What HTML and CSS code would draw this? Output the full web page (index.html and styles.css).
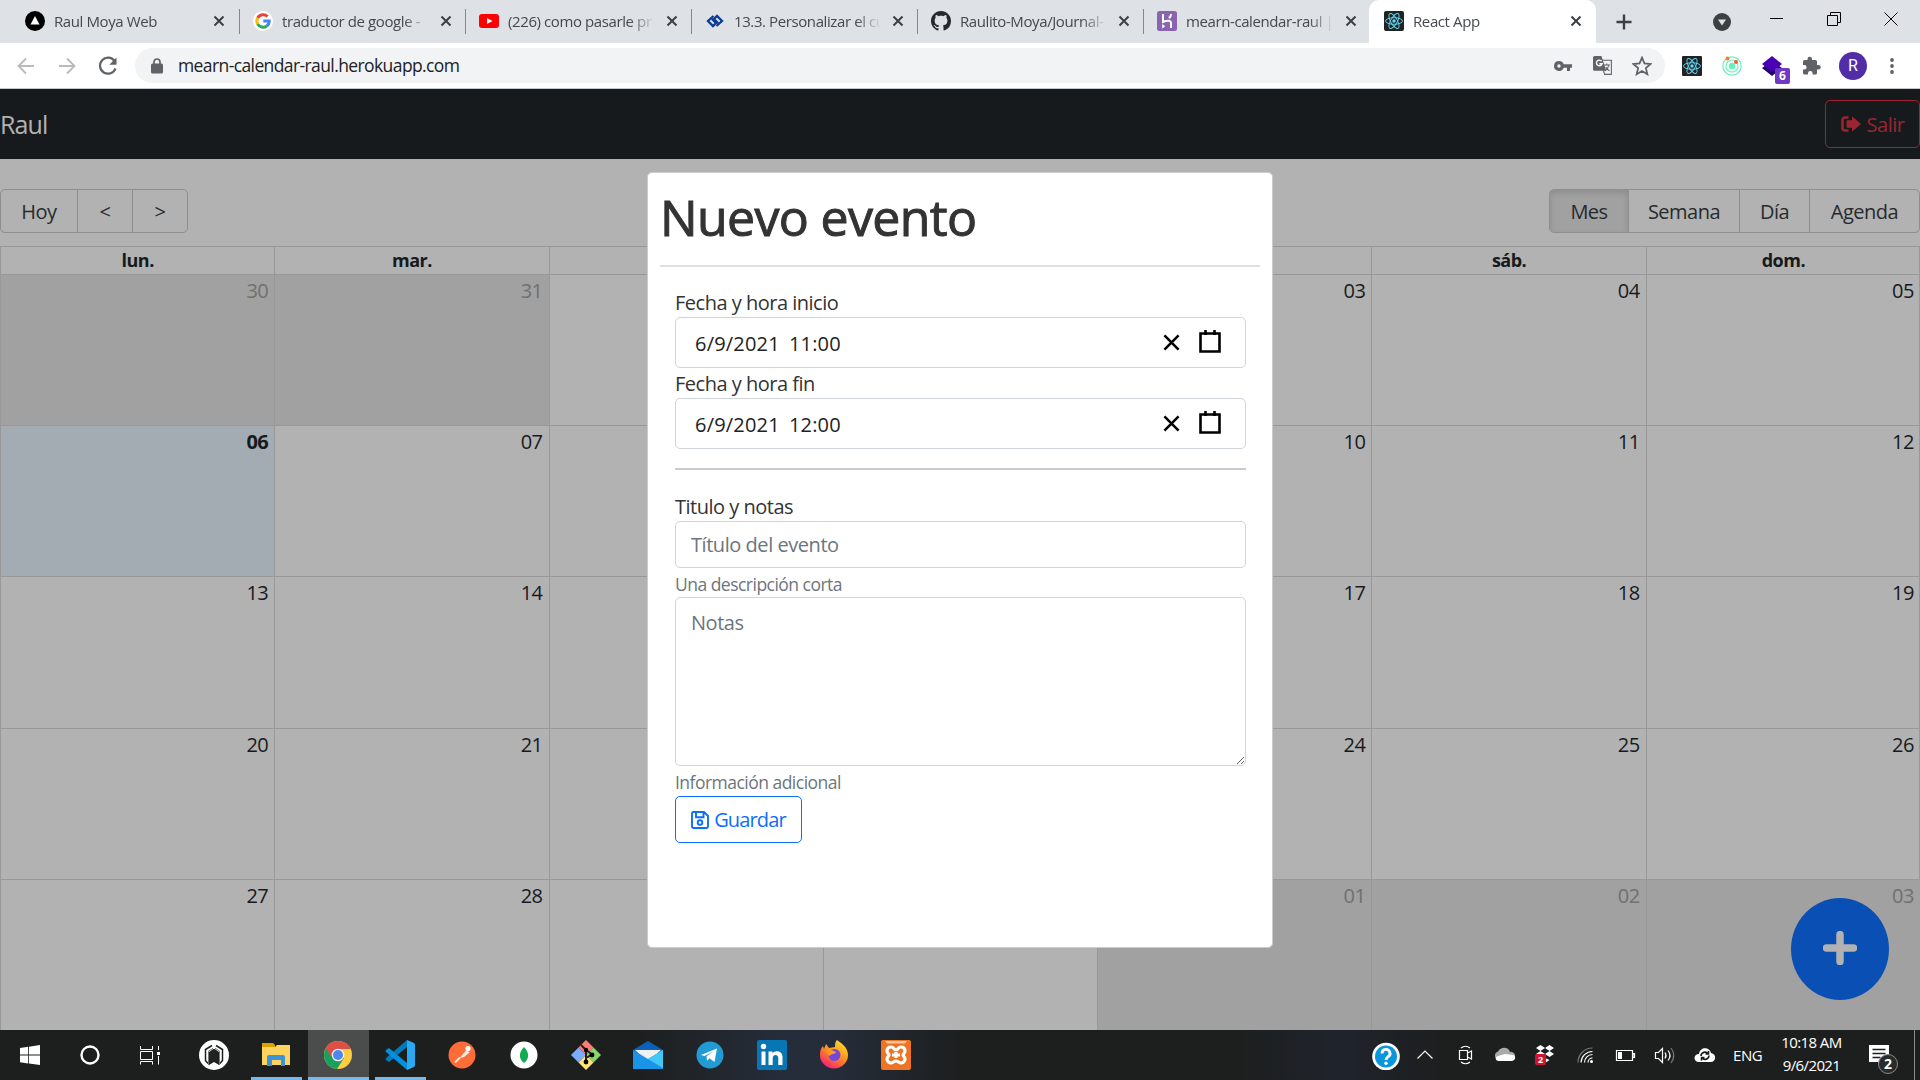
FILE: index.html
```html
<!DOCTYPE html>
<html lang="es">
<head>
<meta charset="utf-8">
<title>React App</title>
<link rel="stylesheet" href="styles.css">
</head>
<body>
<div class="screen">
  <header class="tabs">
    <div class="tab"><svg class="fav" viewBox="0 0 20 20"><circle cx="10" cy="10" r="10" fill="#000"/><path d="M10 5l4.500 8.500h-9z" fill="#fff"/></svg><span class="tab-title">Raul Moya Web</span><svg class="x" viewBox="0 0 12 12"><path d="M1.500 1.500l9 9M10.500 1.500l-9 9"/></svg></div>
    <div class="tab"><svg class="fav" viewBox="0 0 20 20"><circle cx="10" cy="10" r="10" fill="#fff"/><g fill="none" stroke-width="3"><path d="M4.600 7A6.300 6.300 0 0 1 14.500 5.500" stroke="#ea4335"/><path d="M4.600 7A6.300 6.300 0 0 0 4.600 13" stroke="#fbbc05"/><path d="M4.600 13A6.300 6.300 0 0 0 13.800 15" stroke="#34a853"/><path d="M13.800 15A6.300 6.300 0 0 0 16.200 10H10.300" stroke="#4285f4"/></g></svg><span class="tab-title">traductor de google -</span><svg class="x" viewBox="0 0 12 12"><path d="M1.500 1.500l9 9M10.500 1.500l-9 9"/></svg></div>
    <div class="tab"><svg class="fav" viewBox="0 0 20 20"><rect y="3" width="20" height="14" rx="3" fill="#f00"/><path d="M8 7l5.500 3L8 13z" fill="#fff"/></svg><span class="tab-title">(226) como pasarle pr</span><svg class="x" viewBox="0 0 12 12"><path d="M1.500 1.500l9 9M10.500 1.500l-9 9"/></svg></div>
    <div class="tab"><svg class="fav" viewBox="0 0 20 20"><g fill="none" stroke="#0b3b94" stroke-width="2.300"><path d="M8.500 5L3 10l5 5 3-3-4-4"/><path d="M11.500 15L17 10l-5-5-3 3 4 4"/></g></svg><span class="tab-title">13.3. Personalizar el cu</span><svg class="x" viewBox="0 0 12 12"><path d="M1.500 1.500l9 9M10.500 1.500l-9 9"/></svg></div>
    <div class="tab"><svg class="fav" viewBox="0 0 16 16"><path fill="#24292e" d="M8 0C3.580 0 0 3.580 0 8c0 3.540 2.290 6.530 5.470 7.590.4.070.55-.17.55-.38 0-.19-.01-.82-.01-1.490-2.010.37-2.530-.49-2.690-.94-.09-.23-.48-.94-.82-1.130-.28-.15-.68-.52-.01-.53.63-.01 1.080.58 1.230.82.720 1.210 1.870.87 2.330.66.070-.52.28-.87.51-1.070-1.780-.2-3.640-.89-3.640-3.950 0-.87.31-1.590.82-2.150-.08-.2-.36-1.020.08-2.120 0 0 .67-.21 2.200.82.640-.18 1.320-.27 2-.27s1.360.09 2 .27c1.530-1.040 2.200-.82 2.200-.82.440 1.100.16 1.920.08 2.120.51.56.82 1.270.82 2.150 0 3.070-1.870 3.750-3.650 3.950.29.25.54.73.54 1.480 0 1.070-.01 1.930-.01 2.200 0 .21.15.46.55.38A8.010 8.010 0 0 0 16 8c0-4.420-3.580-8-8-8z"/></svg><span class="tab-title">Raulito-Moya/Journal-</span><svg class="x" viewBox="0 0 12 12"><path d="M1.500 1.500l9 9M10.500 1.500l-9 9"/></svg></div>
    <div class="tab last"><svg class="fav" viewBox="0 0 20 20"><rect width="20" height="20" rx="2.500" fill="#8a63b3"/><path d="M6 3v8c3-1.500 8-2.500 8 1v5M14 3c0 2-1 3.200-2 4.200" fill="none" stroke="#fff" stroke-width="2"/><path d="M5.200 13l3 2.200-3 2.300z" fill="#fff"/></svg><span class="tab-title">mearn-calendar-raul |</span><svg class="x" viewBox="0 0 12 12"><path d="M1.500 1.500l9 9M10.500 1.500l-9 9"/></svg></div>
    <div class="tab active"><svg class="fav" viewBox="0 0 20 20"><rect width="20" height="20" rx="2" fill="#222"/><g fill="none" stroke="#61dafb" stroke-width=".9"><ellipse cx="10" cy="10" rx="8.500" ry="3.300"/><ellipse cx="10" cy="10" rx="8.500" ry="3.300" transform="rotate(60 10 10)"/><ellipse cx="10" cy="10" rx="8.500" ry="3.300" transform="rotate(120 10 10)"/></g><circle cx="10" cy="10" r="1.700" fill="#61dafb"/></svg><span class="tab-title">React App</span><svg class="x" viewBox="0 0 12 12"><path d="M1.500 1.500l9 9M10.500 1.500l-9 9"/></svg></div>
    <svg class="new-tab" viewBox="0 0 16 16"><path d="M8 .5v15M.5 8h15" stroke="#3c4043" stroke-width="2.400"/></svg>
    <svg class="tab-search" viewBox="0 0 18 18"><circle cx="9" cy="9" r="9" fill="#3c4043"/><path d="M5 6.500h8L9 12.500z" fill="#dee1e6"/></svg>
    <div class="window-buttons">
      <svg viewBox="0 0 14 14"><path d="M0 6.500h13"/></svg>
      <svg viewBox="0 0 14 14"><path d="M.5 3.500h10v10H.5zM3.500 3V.5h10v10H11"/></svg>
      <svg viewBox="0 0 14 14"><path d="M.5.5l13 13M13.500.5l-13 13"/></svg>
    </div>
  </header>

  <div class="address-row">
    <div class="nav-icons">
      <svg viewBox="0 0 20 20"><path d="M18 10H3M10 2.500L2.500 10l7.500 7.500" stroke="#bababc"/></svg>
      <svg viewBox="0 0 20 20"><path d="M2 10h15M10 2.500l7.500 7.500-7.500 7.500" stroke="#bababc"/></svg>
      <svg viewBox="0 0 20 20"><path d="M16.500 5A8 8 0 1 0 17.500 12.500" stroke="#5f6368" stroke-width="2.200"/><path d="M18.500 1.500v7.200h-7.200z" fill="#5f6368"/></svg>
    </div>
    <div class="omnibox">
      <svg class="lock" viewBox="0 0 12 16"><rect y="5.500" width="12" height="10" rx="1.500" fill="#5f6368"/><path d="M3 6V4a3 3 0 0 1 6 0v2" fill="none" stroke="#5f6368" stroke-width="1.700"/></svg>
      <span class="url">mearn-calendar-raul.herokuapp.com</span>
      <svg class="key" viewBox="0 0 18 10"><path fill="#5f6368" fill-rule="evenodd" d="M5 0a5 5 0 1 0 4.700 6.700h3.300V10h3V6.700h2V3.300H9.700A5 5 0 0 0 5 0zm0 3.300a1.700 1.700 0 1 1 0 3.400 1.700 1.700 0 0 1 0-3.400z"/></svg>
      <svg class="translate" viewBox="0 0 18 18"><path d="M7 4h10.400v13.400H11z" fill="#f1f3f4" stroke="#5f6368"/><path d="M1.500 0h6.500l4.500 14H1.500A1.500 1.500 0 0 1 0 12.500v-11A1.500 1.500 0 0 1 1.500 0z" fill="#5f6368"/><path d="M8.200 5A2.700 2.700 0 1 0 8.600 7.300H6" fill="none" stroke="#fff" stroke-width="1.300"/><path d="M10.500 8.500h5.500M13 7v1.500M15 8.500c-.5 3-2 4.500-3.500 5.500M12 10.500c1 1.500 2 2.500 3.500 3.500" fill="none" stroke="#5f6368"/></svg>
      <svg class="star" viewBox="0 0 18 18"><path d="M9 1.500l2.200 5.200 5.600.5-4.300 3.700 1.300 5.500L9 13.500l-4.800 2.900 1.300-5.500L1.200 7.200l5.600-.5z" fill="none" stroke="#5f6368" stroke-width="1.600"/></svg>
    </div>
    <div class="extensions">
      <svg viewBox="0 0 20 20"><rect width="20" height="20" rx="1" fill="#222"/><g fill="none" stroke="#61dafb" stroke-width=".9"><ellipse cx="10" cy="10" rx="8.500" ry="3.300"/><ellipse cx="10" cy="10" rx="8.500" ry="3.300" transform="rotate(60 10 10)"/><ellipse cx="10" cy="10" rx="8.500" ry="3.300" transform="rotate(120 10 10)"/></g><circle cx="10" cy="10" r="1.700" fill="#61dafb"/></svg>
      <svg viewBox="0 0 20 20"><circle cx="10" cy="10" r="9.200" fill="none" stroke="#6ff2b4" stroke-width="1.200"/><circle cx="10" cy="10" r="6" fill="none" stroke="#6ff2c8" stroke-width="1.200"/><circle cx="10" cy="10" r="3.200" fill="#5ef5b5"/><circle cx="5.500" cy="2.500" r="2" fill="#ff7a2f"/><circle cx="14" cy="6" r="2" fill="#ff5530"/></svg>
      <span class="layers"><svg viewBox="0 0 20 20"><path d="M0 12l10 8 10-8-10-7z" fill="#200070"/><path d="M10 0l10 8-10 8L0 8z" fill="#4a00b4"/></svg><b class="count">6</b></span>
      <svg viewBox="0 0 20 20"><path fill="#5f6368" d="M16.500 9H15V5.500A1.500 1.500 0 0 0 13.500 4H10V3a2 2 0 0 0-4.500 0v1H2.500A1.500 1.500 0 0 0 1 5.500V9h1.300a2.300 2.300 0 0 1 0 4.600H1V17a1.500 1.500 0 0 0 1.500 1.500H6v-1.300a2.300 2.300 0 0 1 4.600 0v1.300h2.900A1.500 1.500 0 0 0 15 17v-3.500h1.500a2.250 2.250 0 0 0 0-4.500z"/></svg>
      <span class="avatar">R</span>
      <svg class="dots" viewBox="0 0 4 16"><circle cx="2" cy="2" r="1.900"/><circle cx="2" cy="8" r="1.900"/><circle cx="2" cy="14" r="1.900"/></svg>
    </div>
  </div>

  <main class="page">
    <nav class="navbar"><span class="brand">Raul</span>
      <button class="logout"><svg viewBox="0 0 20 16"><path d="M7.500 1.500H4A2.500 2.500 0 0 0 1.500 4v8A2.500 2.500 0 0 0 4 14.500h3.500" fill="none" stroke="currentColor" stroke-width="2.600"/><path d="M11.500 1.200v3.600H6v6.400h5.500v3.600L19.500 8z" fill="currentColor" stroke="currentColor" stroke-linejoin="round"/></svg><span>Salir</span></button>
    </nav>
    <div class="cal-toolbar">
      <div class="group nav-group"><button>Hoy</button><button>&lt;</button><button>&gt;</button></div>
      <div class="group view-group"><button class="pressed">Mes</button><button>Semana</button><button>Día</button><button>Agenda</button></div>
    </div>
    <section class="calendar">
      <div class="week head"><div>lun.</div><div>mar.</div><div></div><div></div><div></div><div>sáb.</div><div>dom.</div></div>
      <div class="week"><div class="off">30</div><div class="off">31</div><div></div><div></div><div>03</div><div>04</div><div>05</div></div>
      <div class="week"><div class="today">06</div><div>07</div><div></div><div></div><div>10</div><div>11</div><div>12</div></div>
      <div class="week"><div>13</div><div>14</div><div></div><div></div><div>17</div><div>18</div><div>19</div></div>
      <div class="week"><div>20</div><div>21</div><div></div><div></div><div>24</div><div>25</div><div>26</div></div>
      <div class="week"><div>27</div><div>28</div><div></div><div></div><div class="off">01</div><div class="off">02</div><div class="off">03</div></div>
    </section>
    <div class="fab"><svg viewBox="0 0 34 34"><path d="M17 3.500v27M3.500 17h27" stroke="#b2b2b2" stroke-width="7.500" stroke-linecap="round"/></svg></div>
    <form class="modal">
      <h1>Nuevo evento</h1>
      <hr class="title-rule">
      <div class="fields">
        <label>Fecha y hora inicio</label>
        <div class="picker"><span>6/9/2021</span><span>11:00</span><svg class="clear" viewBox="0 0 18 18"><path d="M1.500 1.500l15 15M16.500 1.500l-15 15"/></svg><svg class="cal-icon" viewBox="0 0 22 23"><path d="M1.500 3.500h19v18h-19zM6.500 0v5M15.500 0v5"/></svg></div>
        <label>Fecha y hora fin</label>
        <div class="picker"><span>6/9/2021</span><span>12:00</span><svg class="clear" viewBox="0 0 18 18"><path d="M1.500 1.500l15 15M16.500 1.500l-15 15"/></svg><svg class="cal-icon" viewBox="0 0 22 23"><path d="M1.500 3.500h19v18h-19zM6.500 0v5M15.500 0v5"/></svg></div>
        <hr class="field-rule">
        <label>Titulo y notas</label>
        <input class="control" type="text" placeholder="Título del evento">
        <small>Una descripción corta</small>
        <textarea class="control" placeholder="Notas"></textarea>
        <small class="notes-help">Información adicional</small>
        <button class="save" type="button"><svg viewBox="0 0 18 18"><path d="M1 2.500A1.500 1.500 0 0 1 2.500 1H13l4 4v10.500a1.500 1.500 0 0 1-1.500 1.500h-13A1.500 1.500 0 0 1 1 15.500zM5 1.500v4.700h7.500V1.500"/><circle cx="9" cy="11.500" r="2.300"/></svg><span>Guardar</span></button>
      </div>
    </form>
  </main>

  <footer class="taskbar">
    <div class="system">
      <svg viewBox="0 0 20 20" width="20" height="20" fill="#fff"><path d="M0 3l8.200-1.200V9.500H0zM9 1.700L20 0v9.500H9zM0 10.400h8.200v8L0 17.300zM9 10.400h11V20L9 18.400z"/></svg>
      <svg viewBox="0 0 20 20" width="20" height="20"><circle cx="10" cy="10" r="8.500" fill="none" stroke="#fff" stroke-width="2.400"/></svg>
      <svg viewBox="0 0 20 20" width="20" height="20" fill="none" stroke="#fff"><path d="M.5 1v3.500h12V1M.5 6.500h12v8H.5zM.5 19.500v-3h12v3M18.500 1v4M18.500 11v8.500"/><path d="M17 7h3v3h-3z" fill="#fff" stroke="none"/></svg>
    </div>
    <div class="apps">
      <div class="app"><svg viewBox="0 0 30 30"><circle cx="15" cy="15" r="15" fill="#fff"/><path d="M13 5.500L6.500 9.500v11l2.500 3M17 5.500l6.500 4v11l-2.500 3" fill="none" stroke="#1d1f1f" stroke-width="1.500"/><path d="M14 8.200l-4.500 3V25M16 8.200l4.500 3V25" fill="none" stroke="#777" stroke-width="1"/><path d="M15 8.500l5 3.500v13l-5-3-5 3V12z" fill="#202222"/><path d="M15 2v7" stroke="#fff" stroke-width="2"/></svg></div>
      <div class="app open"><svg viewBox="0 0 30 30"><path d="M1 3h11l2 2v6H1z" fill="#dfa100"/><path d="M1 7h13l2-2h13v20H1z" fill="#ffd45e"/><path d="M6 26V17q0-2 2-2h14q2 0 2 2v9h-4v-6h-9v6z" fill="#3b93d9"/></svg></div>
      <div class="app open current"><svg viewBox="0 0 30 30"><circle cx="15" cy="15" r="14" fill="#ffcd42"/><path d="M15 15L2.900 8A14 14 0 0 0 14 29l7-11z" fill="#18a05e"/><path d="M2.900 8A14 14 0 0 1 27.600 9H15v6L9 18z" fill="#dc4f42"/><circle cx="15" cy="15" r="6.300" fill="#f1f1f1"/><circle cx="15" cy="15" r="5" fill="#4b87ee"/></svg></div>
      <div class="app open"><svg viewBox="0 0 30 30"><path d="M22 0v7L4 22l-3-2q-1-1 0-2z" fill="#0078bd"/><path d="M22 30v-7L4 8 1 10q-1 1 0 2z" fill="#0090dc"/><path d="M22 0l7 3q1 1 1 2v20q0 1-1 2l-7 3z" fill="#29a9f2"/></svg></div>
      <div class="app"><svg viewBox="0 0 30 30"><circle cx="15" cy="15" r="13.500" fill="#ff6c37"/><circle cx="21" cy="8.500" r="2.600" fill="#fff"/><path d="M19.500 10l3 2.500-5.500 4.500-5 1.500z" fill="#ffe8df"/><path d="M13 17.500L8 22.500" fill="none" stroke="#ffe8df" stroke-width="1.800"/></svg></div>
      <div class="app"><svg viewBox="0 0 30 30"><circle cx="15" cy="15" r="13.500" fill="#fff"/><path d="M15 7c6 6 5 12 0 16-5-4-6-10 0-16z" fill="#13aa52"/></svg></div>
      <div class="app"><svg viewBox="0 0 30 30"><path d="M15 0l7.500 7.500L15 15 7.500 7.500z" fill="#ff7b78"/><path d="M22.500 7.500L30 15l-7.500 7.500L15 15z" fill="#89d56b"/><path d="M7.500 7.500L15 15l-7.500 7.500L0 15z" fill="#7badff"/><path d="M15 15l7.500 7.500L15 30l-7.500-7.500z" fill="#ffe37b"/><path d="M10 5l5 5v12M15 10l7 5M15 18l5-3" fill="none" stroke="#222" stroke-width="2"/><circle cx="15" cy="10" r="2.200"/><circle cx="21" cy="15" r="2.400"/><circle cx="15" cy="22" r="2.400"/></svg></div>
      <div class="app"><svg viewBox="0 0 30 30"><path d="M0 10L15 1l15 9v6H0z" fill="#0a61b7"/><path d="M2 10h26L15 22z" fill="#f0f0f0"/><path d="M0 10l15 9 15-9v19H0z" fill="#1a94e6"/><path d="M30 10v18L15 19z" fill="#42c8f5"/></svg></div>
      <div class="app"><svg viewBox="0 0 30 30"><circle cx="15" cy="15" r="13.500" fill="#229bd5"/><path d="M6 15l16-6.500L19.500 22l-5-3.700-2.500 2.500-.5-4.500 7-5-9 4.700z" fill="#fff"/></svg></div>
      <div class="app"><svg viewBox="0 0 30 30"><rect width="30" height="30" rx="2" fill="#0676b4"/><path d="M4.500 11.500h4V25h-4zM11.500 11.500h4v2c2-3.500 10-3 10 3.500v8h-4.200v-7c0-4-5.600-4-5.600 0v7h-4.200z" fill="#fff"/><circle cx="6.500" cy="6.500" r="2.700" fill="#fff"/></svg></div>
      <div class="app"><svg viewBox="0 0 30 30"><defs><linearGradient id="fox" x1=".8" y1="0" x2=".2" y2="1"><stop offset="0" stop-color="#ffe226"/><stop offset=".5" stop-color="#ff8a1f"/><stop offset="1" stop-color="#f5157e"/></linearGradient></defs><path d="M18 0c4 3 11 7 11 15a14 13.500 0 0 1-28 0c0-4 1-7 3-9l1 3 2-5 3 4 6-1c0-3 0-5 2-7z" fill="url(#fox)"/><circle cx="15.500" cy="15" r="6" fill="#7547d8"/><path d="M7 10c5-1 7 1 10 2-1 3-5 1-6 4-2-1-4-3-4-6z" fill="#ff9a22"/></svg></div>
      <div class="app"><svg viewBox="0 0 30 30"><rect width="30" height="30" rx="2" fill="#ec7424"/><path d="M4 1h22l-2 2.500H6z" fill="#ffc49b"/><path d="M10 7c3 0 3 3 5 3s2-3 5-3 4 2 4 4-2 3-2 4 2 2 2 4-2 4-4 4-3-2-5-2-3 2-5 2-4-2-4-4 2-3 2-4-2-2-2-4 1-4 4-4zM11 15h8M15 12v6" fill="none" stroke="#fff" stroke-width="3.200"/></svg></div>
    </div>
    <div class="tray">
      <svg viewBox="0 0 30 30"><circle cx="16" cy="16.500" r="13.800" fill="#fff"/><circle cx="16" cy="16.500" r="11" fill="#0b96dc"/><path d="M12 13.500a4 4 0 1 1 6 3.300c-1.500 1-2 1.500-2 3.200" fill="none" stroke="#fff" stroke-width="2.800"/><circle cx="16" cy="23.300" r="1.700" fill="#fff"/></svg>
      <svg viewBox="0 0 30 30"><path d="M7.500 18.500L15 11l7.500 7.500" class="line"/></svg>
      <svg viewBox="0 0 30 30"><path d="M9.500 10.500h8v9h-8zM17.500 13l4-2v8l-4-2M11 8q4.500-3.500 9 0M11 22q4.500 3.500 9 0" class="line"/></svg>
      <svg viewBox="0 0 30 30"><path d="M8 20a4.500 4.500 0 0 1 0-8.500C11 6 19 7 20 12a4 4 0 0 1 2 8z" fill="#aaa"/><path d="M8 21c-3-1-3-4 0-5l7-2 8 1c3 1 3 5-1 6z" fill="#fff"/></svg>
      <span class="dropbox"><svg viewBox="0 0 30 30"><path d="M10.500 5l4.500 3-4.500 3L6 8zM19.500 5L24 8l-4.500 3L15 8zM10.500 11l4.500 3-4.500 3L6 14zM19.500 11l4.500 3-4.500 3-4.500-3zM15 18l4.500 2-4.500 3-4.500-3z" fill="#fff"/></svg><b>2</b></span>
      <svg viewBox="0 0 30 30"><path d="M8 22.500A14.500 14.500 0 0 1 22.500 8" class="line dim"/><path d="M11 22.500A11.500 11.500 0 0 1 22.500 11.500M14.500 22.500a8 8 0 0 1 8-8M18 22.500a4.500 4.500 0 0 1 4.500-4.500" class="line"/><circle cx="21.500" cy="21.500" r="1.500" fill="#fff"/></svg>
      <svg viewBox="0 0 30 30"><path d="M6.500 10.500h16v10h-16zM23 13.500h1.500v4H23z" class="line"/><path d="M8 12h4v7H8z" fill="#fff"/></svg>
      <svg viewBox="0 0 30 30"><path d="M5.500 12.500h3l4-4v14l-4-4h-3zM15 12.500q2 3 0 6M18 10.500q4 5 0 10" class="line"/><path d="M21 8q5.500 7.500 0 15" class="line dim"/></svg>
      <svg viewBox="0 0 30 30"><path d="M9 22c-6 0-6-8 0-8C10 6 20 7 21 13c6 1 5 9 0 9z" fill="#fff"/><path d="M11 16a4 4 0 0 1 7-2.500M19 15.500a4 4 0 0 1-7 2.500M18.500 11v3h-3M11.500 20.500v-3h3" fill="none" stroke="#1d1f1f" stroke-width="1.600"/></svg>
    </div>
    <span class="lang">ENG</span>
    <div class="clock"><span>10:18 AM</span><span>9/6/2021</span></div>
    <div class="notices"><svg viewBox="0 0 20 20"><path d="M0 0h20v17h-6l-5 3v-3H0z" fill="#fff"/><path d="M3.500 4.500h13M3.500 8.500h13M3.500 12.500h8" stroke="#1d1f1f" stroke-width="1.300"/></svg><b>2</b></div>
  </footer>
</div>
</body>
</html>
```
FILE: styles.css
```css
* { box-sizing: border-box; }
body { margin: 0; font-family: "Open Sans", "Noto Sans", sans-serif; font-size: 20px; color: #333; }
svg { display: block; flex: none; }
button { font: inherit; color: inherit; background: none; padding: 0; letter-spacing: inherit; }
.screen { width: 1920px; height: 1080px; display: flex; flex-direction: column; overflow: hidden; letter-spacing: -0.5px; }

/* Browser tabs */
.tabs { height: 43px; flex: none; background: #dee1e6; display: flex; align-items: center; padding-left: 14px; }
.tab { width: 226px; height: 43px; flex: none; display: flex; align-items: center; padding: 0 14px 1px 13px; position: relative; }
.tab:first-child { padding-left: 11px; padding-right: 15px; }
.tab::after { content: ""; position: absolute; right: 0; top: 9px; width: 1px; height: 25px; background: #84888d; }
.tab.last::after, .tab.active::after { display: none; }
.tab.last { width: 225px; padding-right: 12px; }
.fav { width: 20px; height: 20px; margin-right: 9px; }
.tab-title { flex: 1; min-width: 0; white-space: nowrap; font-size: 15px; letter-spacing: -0.4px; color: #45494d; margin-right: 8px; -webkit-mask-image: linear-gradient(to right, #000 calc(100% - 28px), transparent 98%); mask-image: linear-gradient(to right, #000 calc(100% - 28px), transparent 98%); }
.x { width: 12px; height: 12px; fill: none; stroke: #3c4043; stroke-width: 2; }
.tab.active { width: 227px; background: #fff; border-radius: 10px 10px 0 0; padding-left: 15px; }
.new-tab { width: 16px; height: 16px; margin-left: 20px; }
.tab-search { width: 18px; height: 18px; margin-left: 81px; }
.window-buttons { display: flex; gap: 43px; margin: -6px 0 0 39px; }
.window-buttons svg { width: 14px; height: 14px; fill: none; stroke: #000; }

/* Address row */
.address-row { height: 46px; flex: none; background: #fff; border-bottom: 1px solid #c6c8cb; display: flex; align-items: center; padding-left: 16px; }
.nav-icons { display: flex; gap: 21px; width: 119px; }
.nav-icons svg { width: 20px; height: 20px; fill: none; stroke-width: 1.8; }
.omnibox { width: 1530px; height: 35px; border-radius: 18px; background: #f1f3f4; display: flex; align-items: center; padding: 0 13px 0 16px; }
.lock { width: 12px; height: 16px; }
.url { flex: 1; margin: -1px 0 0 15px; font-size: 17.5px; letter-spacing: -0.6px; color: #202124; }
.key { width: 18px; height: 10px; }
.translate { width: 19px; height: 19px; margin-left: 21px; }
.star { width: 20px; height: 20px; margin-left: 20px; }
.extensions { display: flex; align-items: center; margin-left: 17px; gap: 20px; }
.extensions > svg, .layers svg { width: 20px; height: 20px; }
.layers { position: relative; }
.count { position: absolute; left: 13px; top: 12px; width: 15px; height: 16px; border-radius: 2px; background: #6f38c5; color: #fff; font-size: 12px; line-height: 16px; text-align: center; letter-spacing: 0; }
.avatar { width: 28px; height: 28px; border-radius: 50%; background: #512da8; color: #fff; font: 16px/28px Roboto, sans-serif; text-align: center; letter-spacing: 0; margin-left: -3px; }
.extensions .dots { width: 4px; height: 16px; fill: #5f6368; margin-left: 3px; }

/* Application */
.page { height: 941px; flex: none; position: relative; background: #b2b2b2; display: flex; flex-direction: column; }
.navbar { height: 70px; flex: none; background: #171a1d; display: flex; align-items: center; justify-content: space-between; }
.brand { font-size: 25px; color: #b2b2b2; letter-spacing: -0.9px; }
.logout { width: 95px; height: 48px; border: 1px solid #9a2530; border-radius: 5px; color: #9a2530; display: flex; align-items: center; justify-content: center; gap: 6px; }
.logout svg { width: 20px; height: 16px; }
.cal-toolbar { flex: none; height: 87px; padding: 30px 0 13px; display: flex; justify-content: space-between; }
.group { display: grid; border: 1px solid #8e8e8e; border-radius: 5px; color: #272a2d; overflow: hidden; }
.group button { border: 0; border-right: 1px solid #8e8e8e; }
.group button:last-child { border-right: 0; }
.nav-group { grid-template-columns: 77px 55px 54px; }
.view-group { grid-template-columns: 79px 111px 70px 109px; }
.pressed { background: #a1a1a1; box-shadow: inset 0 3px 6px rgba(0,0,0,.13); }
.calendar { flex: 1; border-top: 1px solid #989898; display: grid; grid-template-rows: 27px repeat(5, 1fr); color: #171a1d; box-shadow: inset -1px 0 #989898; }
.week { display: grid; grid-template-columns: repeat(7, 1fr); }
.week > div { border-left: 1px solid #989898; text-align: right; padding: 2px 6px 0 0; line-height: 27px; }
.week:not(.head) { border-top: 1px solid #989898; }
.week.head > div { padding: 0; text-align: center; font-weight: 700; font-size: 18px; line-height: 27px; letter-spacing: -0.5px; }
.week > .off { background: #a1a1a1; color: #707070; }
.week > .today { background: #a3abb3; font-weight: 700; }
.fab { position: absolute; left: 1791px; top: 809px; width: 98px; height: 102px; border-radius: 50%; background: #0a50b4; display: flex; align-items: center; justify-content: center; }
.fab svg { width: 34px; height: 34px; margin-top: -3px; }

/* Event form */
.modal { position: absolute; left: 647px; top: 83px; width: 626px; height: 776px; border: 1px solid #ccc; border-radius: 5px; background: #fff; padding: 12px; }
.modal h1 { margin: 0; font-size: 50px; line-height: 64px; font-weight: 500; letter-spacing: -0.65px; color: #333; -webkit-text-stroke: 1px #333; }
.title-rule { height: 2px; margin: 16px 0 20px; border: 0; background: #dfdfdf; }
.fields { padding: 0 14px 0 15px; display: flex; flex-direction: column; }
.fields label { line-height: 32px; height: 30px; white-space: nowrap; }
.fields small { font-size: 17.5px; line-height: 26px; padding-top: 3px; height: 29px; color: #6c757d; letter-spacing: -0.52px; }
.fields .notes-help { height: 30px; }
.picker { height: 51px; border: 1px solid #ced4da; border-radius: 5px; display: flex; align-items: center; gap: 9px; padding: 1px 24px 0 19px; color: #222; letter-spacing: 0.2px; }
.clear { width: 17px; height: 17px; margin: -2px 10px 0 auto; fill: none; stroke: #000; stroke-width: 2.7; }
.cal-icon { width: 22px; height: 23px; margin-top: -3px; fill: none; stroke: #000; stroke-width: 2.6; }
.field-rule { width: 100%; height: 2px; margin: 19px 0 21px; border: 0; background: #cbcbcb; }
.control { width: 100%; height: 47px; margin: 0; border: 1px solid #ced4da; border-radius: 5px; padding: 0 15px; font: inherit; letter-spacing: -0.45px; background: #fff; display: block; }
.control::placeholder { color: #6c757d; opacity: 1; }
textarea.control { height: 169px; padding-top: 10px; line-height: 30px; resize: vertical; }
.save { width: 127px; height: 47px; border: 1px solid #0d6efd; border-radius: 5px; color: #0d6efd; display: flex; align-items: center; justify-content: center; gap: 5px; letter-spacing: -0.85px; }
.save svg { width: 18px; height: 18px; fill: none; stroke: currentColor; stroke-width: 1.9; }

/* Taskbar */
.taskbar { height: 50px; flex: none; background: linear-gradient(to right, #1d1f1f 0, #1d1f1f 640px, #262d3a 780px, #262d3a 830px, #1d1f1f 960px, #1d1f1f 1240px, #1f232b 1340px, #1d1f1f 1440px); display: flex; color: #fff; font-size: 15px; letter-spacing: -0.4px; }
.system { width: 183px; display: grid; grid-template-columns: repeat(3, 60px); align-items: center; justify-items: center; }
.apps { display: flex; width: 1182px; }
.app { width: 62px; height: 50px; display: flex; align-items: center; justify-content: center; position: relative; }
.app svg { width: 30px; height: 30px; }
.app.open::after { content: ""; position: absolute; left: 6px; right: 5px; bottom: 0; height: 3px; background: #76b9ed; }
.app.current { background: linear-gradient(#4b4d4d, #4b4d4d) 1px 0 / 61px 50px no-repeat; }
.app.current::after { left: 1px; right: 0; }
.tray { display: flex; align-items: center; width: 360px; justify-content: space-around; }
.tray svg { width: 30px; height: 30px; }
.line { fill: none; stroke: #fff; stroke-width: 1.2; }
.dim { stroke: #777; }
.dropbox { position: relative; }
.dropbox b { position: absolute; left: 5px; top: 14px; width: 11px; height: 11px; border-radius: 2px; background: #d5122b; font-size: 9px; line-height: 11px; text-align: center; letter-spacing: 0; }
.lang { width: 56px; padding-left: 8px; line-height: 50px; }
.clock { width: 61px; display: flex; flex-direction: column; align-items: center; line-height: 23px; padding-top: 1px; white-space: nowrap; letter-spacing: -0.6px; }
.notices { position: relative; margin-left: 27px; padding-top: 15px; width: 46px; border-right: 1px solid #8a8a8a; }
.notices svg { width: 20px; height: 20px; }
.notices b { position: absolute; left: 9px; top: 24px; width: 20px; height: 20px; border: 1px solid #888; border-radius: 50%; background: #2a2b2b; text-align: center; font-size: 14px; line-height: 18px; letter-spacing: 0; }
```
